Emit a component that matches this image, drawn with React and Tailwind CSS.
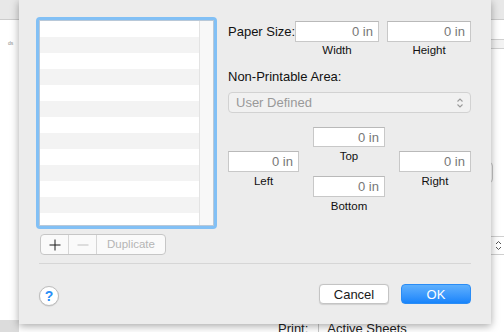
import React from "react";

function Field({ w, h = 21 }) {
  return (
    <div
      className="flex items-center justify-end bg-white border border-[#c8c8c8] border-t-[#b9b9b9] pr-[5px] text-[13px] text-[#777777] leading-none shrink-0"
      style={{ width: w, height: h }}
    >
      0 in
    </div>
  );
}

function SubLabel({ children, className = "" }) {
  return (
    <div className={"text-center whitespace-nowrap text-[11.5px] leading-[13px] text-[#111] " + className}>{children}</div>
  );
}

export default function App() {
  const rows = Array.from({ length: 13 });
  return (
    <div className="relative w-[504px] h-[332px] overflow-hidden bg-white font-['Liberation_Sans',Arial,sans-serif]">
      {/* background window */}
      <div className="flex flex-col h-full">
        <div className="h-[20px] shrink-0 bg-[#e8e8e8] border-b border-[#cccccc]" />
        <div className="flex flex-1 min-h-0">
          <div className="w-[19px] flex flex-col">
            <span className="mt-[20px] ml-[8px] text-[5px] leading-[6px] text-[#8a8a8a]">ds</span>
            <div className="mt-auto h-[12px] bg-[#dcdcdc]" />
          </div>
          <div className="flex-1 flex flex-col">
            <div className="mt-auto h-[11px] flex items-start text-[13px] leading-[15px] text-[#222] whitespace-nowrap">
              <span className="ml-[259px]">Print:</span>
              <div className="ml-[10px] w-px h-[12px] bg-[#c8c8c8]" />
              <span className="ml-[8px]">Active Sheets</span>
            </div>
          </div>
          <div className="w-[30px] flex flex-col">
            <div className="h-[20px] bg-white border-b border-[#d0d0d0]" />
            <div className="h-[9px] bg-[#f3f3f3] border-b border-[#d0d0d0]" />
            <div className="mt-[113px] mr-[11px] h-[21px] rounded-[4px] border border-[#c6c6c6] bg-white" />
            <div className="mt-[53px] h-[19px] border-t border-b border-[#cfcfcf] bg-white flex items-center justify-end pr-[2px]">
              <svg width="7" height="13" viewBox="0 0 7 13" fill="none" stroke="#555" strokeWidth="1">
                <path d="M1 5 L3.5 2.5 L6 5" />
                <path d="M1 8 L3.5 10.5 L6 8" />
              </svg>
            </div>
          </div>
        </div>
      </div>

      {/* sheet dialog */}
      <div className="absolute left-[19px] top-0 w-[472px] h-[324px] bg-[#ececec] shadow-[0_2px_8px_rgba(0,0,0,0.35)] flex flex-col">
        <div className="flex pt-[17px] pl-[17px]">
          {/* list */}
          <div className="w-[181px] h-[212px] rounded-[4px] bg-[#82c0f5] p-[3px] shrink-0">
            <div className="w-full h-full border border-[#b8c8d8] bg-white flex overflow-hidden">
              <div className="flex-1 flex flex-col">
                {rows.map((_, i) => (
                  <div
                    key={i}
                    className={(i % 2 === 0 ? "bg-white" : "bg-[#f3f3f3]") + " h-[16px] shrink-0"}
                  />
                ))}
              </div>
              <div className="w-[14px] bg-[#f8f8f8] border-l border-[#e3e3e3]" />
            </div>
          </div>

          {/* form */}
          <div className="ml-[11px] w-[243px] shrink-0 flex flex-col text-[13px] text-[#111]">
            <div className="mt-[4px] flex items-center">
              <span className="w-[67px] shrink-0 whitespace-nowrap leading-[15px]">Paper Size:</span>
              <Field w={84} />
              <div className="w-[8px] shrink-0" />
              <Field w={84} />
            </div>
            <div className="mt-[2px] flex pl-[67px] gap-[8px]">
              <SubLabel className="w-[84px]">Width</SubLabel>
              <SubLabel className="w-[84px]">Height</SubLabel>
            </div>
            <div className="mt-[12px] leading-[16px] whitespace-nowrap">Non-Printable Area:</div>
            <div className="mt-[7px] h-[21px] rounded-[4px] border border-[#d2d2d2] bg-[#f1f1f1] flex items-center pl-[7px] pr-[6px] text-[#999999]">
              <span className="flex-1 leading-none">User Defined</span>
              <svg width="8" height="14" viewBox="0 0 8 14" fill="none" stroke="#9a9a9a" strokeWidth="1.1">
                <path d="M1.5 5.5 L4 3 L6.5 5.5" />
                <path d="M1.5 8.5 L4 11 L6.5 8.5" />
              </svg>
            </div>
            <div className="flex items-start gap-[14px]">
              <div className="mt-[38px] w-[71px] flex flex-col">
                <Field w={71} />
                <SubLabel className="mt-[3px]">Left</SubLabel>
              </div>
              <div className="mt-[14px] w-[72px] flex flex-col">
                <Field w={72} h={20} />
                <SubLabel className="mt-[3px]">Top</SubLabel>
                <div className="mt-[13px]">
                  <Field w={72} />
                </div>
                <SubLabel className="mt-[3px]">Bottom</SubLabel>
              </div>
              <div className="mt-[38px] w-[72px] flex flex-col">
                <Field w={72} />
                <SubLabel className="mt-[3px]">Right</SubLabel>
              </div>
            </div>
          </div>
        </div>

        {/* segmented buttons */}
        <div className="mt-[5px] ml-[21px] w-[126px] h-[21px] flex rounded-[4px] border border-[#c6c6c6] bg-[#fafafa] overflow-hidden">
          <div className="w-[28px] flex items-center justify-center border-r border-[#d6d6d6]">
            <svg width="12" height="12" viewBox="0 0 12 12" stroke="#1a1a1a" strokeWidth="1">
              <path d="M6 0.5 V11.5 M0.5 6 H11.5" />
            </svg>
          </div>
          <div className="w-[28px] flex items-center justify-center border-r border-[#d6d6d6]">
            <svg width="12" height="12" viewBox="0 0 12 12" stroke="#c0c0c0" strokeWidth="1">
              <path d="M0.5 6 H11.5" />
            </svg>
          </div>
          <div className="flex-1 flex items-center justify-center text-[11.5px] text-[#b5b5b5] leading-none">
            Duplicate
          </div>
        </div>

        <div className="mt-[8px] ml-[20px] w-[432px] h-px bg-[#d6d6d6]" />

        <div className="mt-[20px] flex items-start pl-[20px] pr-[20px]">
          <div className="mt-[2px] w-[20px] h-[20px] rounded-full bg-white border border-[#bdbdbd] shadow-[0_0.5px_1px_rgba(0,0,0,0.15)] flex items-center justify-center text-[14px] font-bold text-[#2a8ff7] leading-none">
            ?
          </div>
          <div className="ml-auto w-[70px] h-[20px] rounded-[4px] bg-white border border-[#c4c4c4] shadow-[0_0.5px_1px_rgba(0,0,0,0.12)] flex items-center justify-center text-[13px] text-[#1a1a1a] leading-none">
            Cancel
          </div>
          <div className="ml-[12px] w-[70px] h-[20px] rounded-[4px] bg-gradient-to-b from-[#5eb0fd] to-[#1684fb] border border-[#2a8cf5] flex items-center justify-center text-[13px] text-white leading-none">
            OK
          </div>
        </div>
      </div>
    </div>
  );
}
